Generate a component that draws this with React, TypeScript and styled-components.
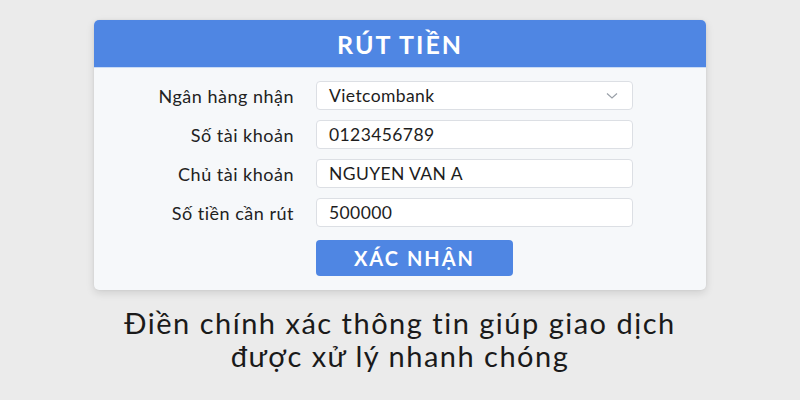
import React from "react";
import styled, { createGlobalStyle } from "styled-components";

const Global = createGlobalStyle`
  html, body { margin: 0; padding: 0; }
  body {
    width: 800px;
    height: 400px;
    background: #ebebeb;
    font-family: Lato, "Noto Sans", sans-serif;
    overflow: hidden;
  }
`;

const Page = styled.div`
  display: flex;
  flex-direction: column;
  align-items: center;
  padding-top: 20px;
`;

const Card = styled.div`
  width: 612px;
  background: #f6f8fa;
  border-radius: 5px;
  overflow: hidden;
  box-shadow: 0 3px 8px rgba(0, 0, 0, 0.12), 0 0 2px rgba(0, 0, 0, 0.08);
`;

const Header = styled.div`
  height: 47px;
  background: #4f86e3;
  display: flex;
  align-items: center;
  justify-content: center;
  color: #fff;
  font-size: 25px;
  font-weight: 700;
  letter-spacing: 2px;
  border-bottom: 1px solid #c9dbf5;
`;

const Body = styled.div`
  padding: 13px 0 14px;
  display: flex;
  flex-direction: column;
  gap: 10px;
`;

const Row = styled.div`
  display: grid;
  grid-template-columns: 200px 317px;
  column-gap: 22px;
  align-items: center;
`;

const Label = styled.div`
  text-align: right;
  font-size: 18px;
  letter-spacing: 0.5px;
  color: #222;
`;

const Field = styled.div`
  height: 27px;
  background: #fff;
  border: 1px solid #dcdfe4;
  border-radius: 4px;
  display: flex;
  align-items: center;
  justify-content: space-between;
  padding: 0 14px 0 12px;
  font-size: 17.5px;
  letter-spacing: 0.4px;
  color: #1d1d1d;
`;

const Chevron = styled.svg`
  width: 12px;
  height: 8px;
`;

const ButtonRow = styled.div`
  display: grid;
  grid-template-columns: 200px 197px;
  column-gap: 22px;
  margin-top: 3px;
`;

const Button = styled.button`
  grid-column: 2;
  height: 36px;
  border: none;
  border-radius: 4px;
  background: #4f86e3;
  color: #fff;
  font-family: Lato, "Noto Sans", sans-serif;
  font-size: 20px;
  font-weight: 700;
  letter-spacing: 2px;
`;

const Caption = styled.div`
  margin-top: 16px;
  text-align: center;
  font-size: 29px;
  line-height: 33px;
  letter-spacing: 1.5px;
  color: #1a1a1a;
`;

const fields = [
  { label: "Ngân hàng nhận", value: "Vietcombank", select: true },
  { label: "Số tài khoản", value: "0123456789" },
  { label: "Chủ tài khoản", value: "NGUYEN VAN A" },
  { label: "Số tiền cần rút", value: "500000" },
];

export default function App() {
  return (
    <>
      <Global />
      <Page>
        <Card>
          <Header>RÚT TIỀN</Header>
          <Body>
            {fields.map((f) => (
              <Row key={f.label}>
                <Label>{f.label}</Label>
                <Field>
                  <span>{f.value}</span>
                  {f.select && (
                    <Chevron viewBox="0 0 12 8">
                      <path d="M1 1.5 L6 6 L11 1.5" fill="none" stroke="#9aa0a8" strokeWidth="1.2" />
                    </Chevron>
                  )}
                </Field>
              </Row>
            ))}
            <ButtonRow>
              <Button>XÁC NHẬN</Button>
            </ButtonRow>
          </Body>
        </Card>
        <Caption>
          Điền chính xác thông tin giúp giao dịch
          <br />
          được xử lý nhanh chóng
        </Caption>
      </Page>
    </>
  );
}
